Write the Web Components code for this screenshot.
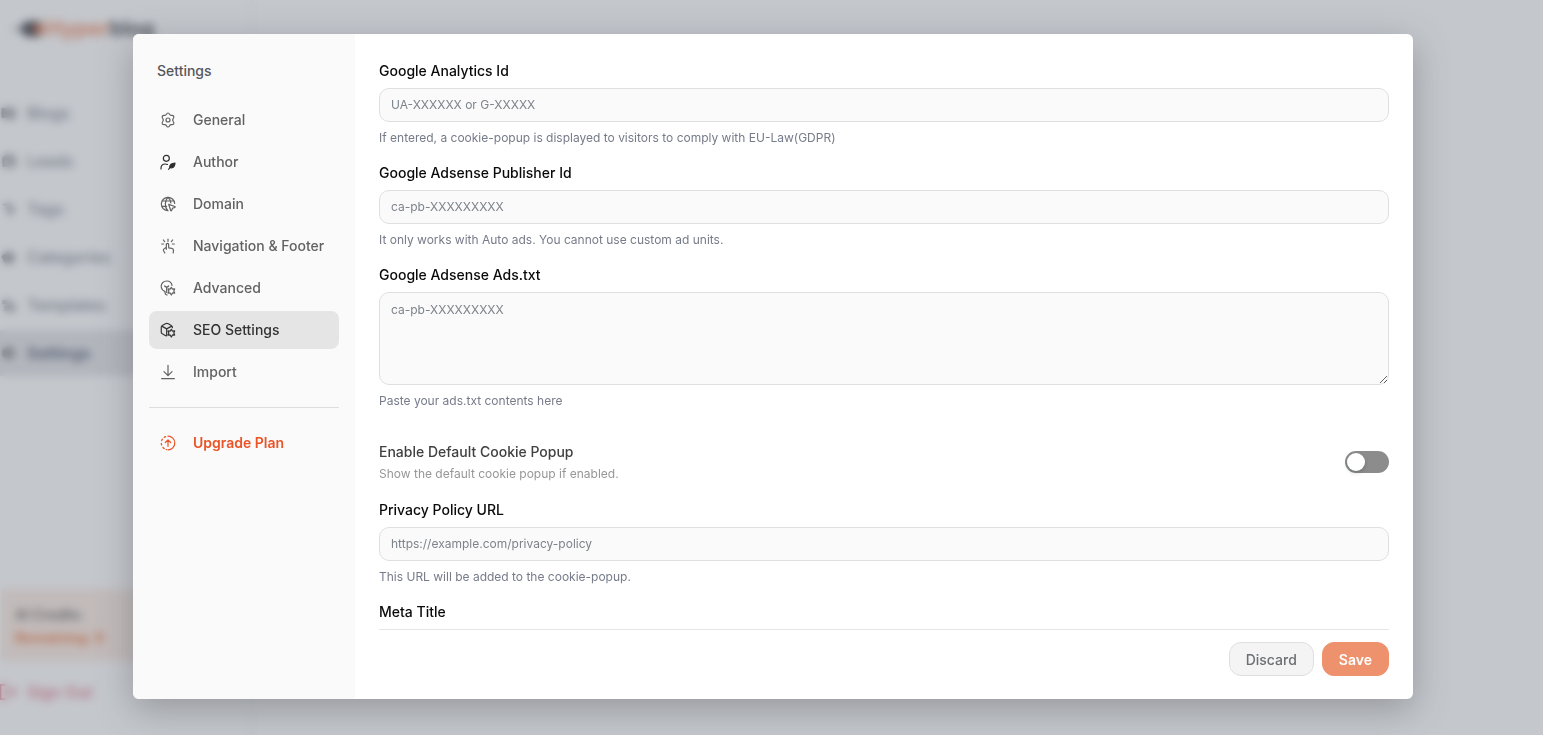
<!DOCTYPE html>
<html lang="en">
<head>
<meta charset="utf-8">
<title>Hyperblog - Settings</title>
<style>
body {
    margin: 0;
    height: 100vh;
    overflow: hidden;
    font-family: Inter, "Open Sans", sans-serif;
    font-size: 14px;
    line-height: 22px;
    background: #fff;
}
</style>
</head>
<body>

<blog-app></blog-app>

<modal-overlay>
    <settings-dialog>
        <settings-nav slot="nav"></settings-nav>

        <text-field label="Google Analytics Id" placeholder="UA-XXXXXX or G-XXXXX"
            hint="If entered, a cookie-popup is displayed to visitors to comply with EU-Law(GDPR)"></text-field>
        <text-field label="Google Adsense Publisher Id" placeholder="ca-pb-XXXXXXXXX"
            hint="It only works with Auto ads. You cannot use custom ad units."></text-field>
        <text-field multiline label="Google Adsense Ads.txt" placeholder="ca-pb-XXXXXXXXX"
            hint="Paste your ads.txt contents here"></text-field>
        <toggle-field label="Enable Default Cookie Popup" hint="Show the default cookie popup if enabled."></toggle-field>
        <text-field label="Privacy Policy URL" placeholder="https://example.com/privacy-policy"
            hint="This URL will be added to the cookie-popup."></text-field>
        <text-field label="Meta Title"></text-field>

        <action-button slot="actions">Discard</action-button>
        <action-button slot="actions" primary>Save</action-button>
    </settings-dialog>
</modal-overlay>

<script>
/* small cog in the lower right corner of an icon */
const cog = `<path d="M17 11l1.800 2.600 3.200-.2-1.300 3.100 1.300 3.100-3.200-.2L17 22.500l-1.800-3.100-3.200.2 1.300-3.100-1.300-3.100 3.200.2z"/>`;

const icons = {
    general: `<circle cx="12" cy="12" r="3"/><path d="M12 1.500c1.300 0 1.900.9 2.400 2 .6 1.200 1.600 1.700 2.900 1.500 1.500-.2 2.500 0 3.200 1.200.7 1.300.3 2.200-.6 3.300-.9 1.200-.9 3.800 0 5 .9 1.100 1.300 2 .6 3.300-.7 1.200-1.700 1.400-3.200 1.200-1.300-.2-2.300.3-2.900 1.500-.5 1.100-1.100 2-2.400 2s-1.900-.9-2.400-2c-.6-1.200-1.600-1.700-2.900-1.500-1.500.2-2.500 0-3.200-1.200-.7-1.300-.3-2.200.6-3.300.9-1.200.9-3.800 0-5-.9-1.100-1.300-2-.6-3.300.7-1.200 1.700-1.400 3.200-1.200 1.300.2 2.300-.3 2.900-1.500.5-1.100 1.100-2 2.400-2z"/>`,
    author: `<circle cx="9.500" cy="6.500" r="4.500"/><path d="M1.500 22.500v-1c0-4 2.900-6.500 6.500-6.500 1.200 0 2.200.2 3.200.7"/><path d="M14.500 20c.2-4 3-6.300 8-6.500-.2 4-2.200 7-5.500 7.200-1 0-1.800-.2-2.500-.7z" fill="currentColor"/><path d="M13 23c1-2 2.500-4 4.500-5"/>`,
    domain: `<path d="M22 11c-.5-5.100-4.800-9-10-9C6.500 2 2 6.500 2 12s4.500 10 10 10M12 2c-5 4.500-5.500 14-.5 20M12 2c2.800 2.500 4.200 5 4.300 8.500M3.500 7.500h17M2.500 15.500h7.500"/><path d="M13 12.500l9.300 3.300c.6.200.6 1 0 1.200l-3.500 1.300-1.500 3.500c-.2.600-1 .6-1.200 0z"/>`,
    nav: `<path d="M12 1.500v3.500M5 3l2 2.500M19 3l-2 2.500M2.500 9h3M18.500 9h3"/><path d="M9.500 17V9.800c0-1 .8-1.600 1.800-1.600s1.700.6 1.700 1.600v4.900l4.500.9c2 .4 3 1.300 2.800 3.200l-.5 3.700M9.500 14l-3.800 2.700c-.8.800-.9 1.500-.4 2.500l2 3.300"/>`,
    advanced: `<path d="M7.500 17.500C4 16 1.800 13 1.800 9.500c0-4.500 3.700-8 8.200-8s7.500 2.800 8 6.500M7.500 17.500c0 3 1 4.800 3.200 5M7 9c.9 1 1.900 1.500 3 1.500s2.100-.5 3-1.500M10 10.500v8"/>${cog}`,
    seo: `<path d="M18.500 8.500V7.600c0-1.200-.5-1.700-1.600-2.300l-4.400-2.600c-1.700-1-2.700-1-4.400 0L3.500 5.300C2.400 6 1.900 6.500 1.900 7.700v7.500c0 1.200.5 1.700 1.600 2.400l4.400 2.600c.7.400 1.300.6 1.900.6M2.700 6.200l7.300 4.100 7.500-4.100M10 10.300V20.500"/>${cog}`,
    import: `<path d="M12 2v15M6 11.500l6 6 6-6M2.500 22h19"/>`,
    upgrade: `<path d="M12 1.800c5.600 0 10.200 4.600 10.200 10.200S17.600 22.200 12 22.200"/><path d="M8.500 2.400c-.8.300-1.500.7-2.200 1.200M3.700 6.200c-.5.700-.9 1.400-1.200 2.200M1.900 12.500c.1.900.3 1.800.6 2.600M4.400 18.700c.6.600 1.300 1.200 2 1.600M9.200 21.900l.5.100"/><path d="M12 17V8M8 11.300L12 7.500l4 3.800"/>`
};

function svgIcon(name, size) {
    return `<svg width="${size}" height="${size}" viewBox="0 0 24 24" fill="none" stroke="currentColor"
        stroke-width="1.8" stroke-linecap="round" stroke-linejoin="round" aria-hidden="true">${icons[name]}</svg>`;
}

/* the dashboard that lies behind the dialog */
class BlogApp extends HTMLElement {

    connectedCallback() {
        const shadow = this.attachShadow({ mode: 'open' });
        const links = ['Blogs', 'Leads', 'Tags', 'Categories', 'Templates', 'Settings'];
        const glyphs = [
            `<path d="M1 3h6v10H1zM8 3h7v4H8zM8 8h7v6H8z"/>`,
            `<path d="M2 4l6-3 7 3v10H2zM5 7v4h6V7z" fill-rule="evenodd"/>`,
            `<path d="M1 3l7-1 7 7-6 5-3-1 3-4-4-4z"/>`,
            `<path d="M8 2l7 5-3 7H4L1 7z"/>`,
            `<path d="M2 3h6v4H2zM4 9h11v5H4zM9 3l5 5h-5z"/>`,
            `<path d="M8 1l6 4v6l-6 4-6-4V5z"/>`
        ];

        shadow.innerHTML = `
            <style>
            :host {
                display: flex;
                height: 100vh;
            }
            aside {
                display: flex;
                flex-direction: column;
                width: 252px;
                box-sizing: border-box;
                border-right: 1px solid #eceef0;
                padding: 18px 0 20px;
            }
            .logo {
                display: flex;
                align-items: center;
                padding-left: 12px;
                margin-bottom: 50px;
                font-size: 21px;
                font-weight: 700;
                color: #4a4a50;
            }
            .logo b {
                color: #f08a66;
                font-weight: 700;
            }
            nav { flex: 1; }
            a {
                display: flex;
                align-items: center;
                gap: 10px;
                height: 46px;
                margin-bottom: 2px;
                font-size: 16px;
                font-weight: 500;
                color: #7b8190;
                text-decoration: none;
            }
            a svg { fill: #8a8a8f; }
            a.current {
                background: #e2e3e5;
                color: #4a5270;
                font-weight: 600;
            }
            .credits {
                padding: 14px 13px 12px;
                margin: 0 12px 8px 2px;
                background: #fcebe2;
                font-weight: 600;
                line-height: 23px;
                color: #666;
            }
            .credits p { margin: 0; }
            .credits p + p { color: #ee8048; font-weight: 700; }
            a.out { color: #e27386; margin: 0; }
            a.out svg { fill: none; stroke: #e27386; stroke-width: 2; }
            </style>
            <aside>
                <div class="logo">
                    <svg width="34" height="22" viewBox="0 0 34 22">
                        <path d="M0 10h8v2H0zM8 6h3v10H8z" fill="#8a8a90"/>
                        <rect x="10" y="3" width="22" height="16" rx="8" fill="#3a3a40"/>
                        <circle cx="27" cy="11" r="5" fill="#e8764f"/>
                    </svg>
                    <span><b>Hyper</b>blog</span>
                </div>
                <nav>
                    ${links.map((text, i) => `<a href="#" class="${text === 'Settings' ? 'current' : ''}">
                        <svg width="17" height="16" viewBox="0 0 16 16">${glyphs[i]}</svg>${text}</a>`).join('')}
                </nav>
                <div class="credits">
                    <p>AI Credits</p>
                    <p>Remaining: 0</p>
                </div>
                <a href="#" class="out">
                    <svg width="17" height="16" viewBox="0 0 16 16"><path d="M7 1H0v14h7M5 8h10M11 4l4 4-4 4"/></svg>
                    Sign Out
                </a>
            </aside>
        `;
    }

}

class ModalOverlay extends HTMLElement {

    connectedCallback() {
        const shadow = this.attachShadow({ mode: 'open' });
        shadow.innerHTML = `
            <style>
            :host {
                position: fixed;
                inset: 0;
                display: flex;
                padding: 34px 130px 36px 133px;
                background: rgba(107, 114, 128, 0.4);
                backdrop-filter: blur(4px);
            }
            </style>
            <slot></slot>
        `;
    }

}

class SettingsDialog extends HTMLElement {

    connectedCallback() {
        const shadow = this.attachShadow({ mode: 'open' });
        shadow.innerHTML = `
            <style>
            :host {
                flex: 1;
                display: flex;
                min-width: 0;
                overflow: hidden;
                border-radius: 6px;
                background: #fff;
                box-shadow: 0 10px 36px rgba(60, 60, 70, 0.35);
            }
            main {
                flex: 1;
                display: flex;
                flex-direction: column;
                min-width: 0;
                padding: 0 24px;
            }
            form {
                flex: 1;
                display: flex;
                flex-direction: column;
                gap: 14px;
                min-height: 0;
                padding-top: 26px;
                overflow-y: auto;
                scrollbar-width: none;
            }
            footer {
                display: flex;
                justify-content: flex-end;
                gap: 8px;
                padding: 12px 0 23px;
                border-top: 1px solid #e5e5e5;
            }
            </style>
            <slot name="nav"></slot>
            <main>
                <form><slot></slot></form>
                <footer><slot name="actions"></slot></footer>
            </main>
        `;
    }

}

class SettingsNav extends HTMLElement {

    connectedCallback() {
        const shadow = this.attachShadow({ mode: 'open' });
        shadow.innerHTML = `
            <style>
            :host {
                display: block;
                flex: none;
                width: 222px;
                box-sizing: border-box;
                padding: 26px 16px;
                background: #fafafa;
            }
            h2 {
                margin: 0 8px 19px;
                font-size: 14px;
                font-weight: 500;
                color: #57575a;
            }
            nav {
                display: flex;
                flex-direction: column;
                gap: 4px;
            }
            hr {
                margin: 16px 0;
                border: 0;
                border-top: 1px solid #dedede;
            }
            </style>
            <h2>Settings</h2>
            <nav>
                <nav-item icon="general">General</nav-item>
                <nav-item icon="author" dark>Author</nav-item>
                <nav-item icon="domain">Domain</nav-item>
                <nav-item icon="nav">Navigation &amp; Footer</nav-item>
                <nav-item icon="advanced">Advanced</nav-item>
                <nav-item icon="seo" selected>SEO Settings</nav-item>
                <nav-item icon="import">Import</nav-item>
            </nav>
            <hr>
            <nav-item icon="upgrade" accent>Upgrade Plan</nav-item>
        `;
    }

}

class NavItem extends HTMLElement {

    connectedCallback() {
        const shadow = this.attachShadow({ mode: 'open' });
        shadow.innerHTML = `
            <style>
            :host {
                display: block;
                --item-color: #626262;
            }
            a {
                display: flex;
                align-items: center;
                gap: 17px;
                height: 38px;
                box-sizing: border-box;
                padding: 0 11px;
                border-radius: 8px;
                color: var(--item-color);
                font-weight: 500;
                line-height: 24px;
                text-decoration: none;
                white-space: nowrap;
            }
            svg { flex: none; }
            :host([dark]) svg { color: #2d2d2d; }
            :host([selected]) {
                --item-color: #333;
            }
            :host([selected]) a { background: #e5e5e5; }
            :host([accent]) { --item-color: #ea5427; }
            :host([accent]) a { font-weight: 600; }
            </style>
            <a href="#">${svgIcon(this.getAttribute('icon'), 16)}<span><slot></slot></span></a>
        `;
    }

}

class TextField extends HTMLElement {

    connectedCallback() {
        const shadow = this.attachShadow({ mode: 'open' });
        const placeholder = this.getAttribute('placeholder') || '';
        const hint = this.getAttribute('hint');

        shadow.innerHTML = `
            <style>
            :host {
                display: flex;
                flex: none;
                flex-direction: column;
                gap: 6px;
            }
            label {
                font-weight: 500;
                color: #0a0a0a;
            }
            input, textarea {
                display: block;
                width: 100%;
                box-sizing: border-box;
                margin: 0;
                padding: 0 11px;
                border: 1px solid #dfdfdf;
                border-radius: 10px;
                outline: none;
                background: #fafafa;
                font: 12px/20px Inter, "Open Sans", sans-serif;
                color: #222;
            }
            input {
                height: 34px;
                padding-bottom: 2px;
            }
            textarea {
                height: 93px;
                padding: 7px 11px;
                resize: vertical;
            }
            ::placeholder { color: #7d838b; opacity: 1; }
            p {
                margin: 0;
                font-size: 12px;
                line-height: 20px;
                color: #757b88;
            }
            </style>
            <label for="field">${this.getAttribute('label')}</label>
            ${this.hasAttribute('multiline')
                ? `<textarea id="field" placeholder="${placeholder}"></textarea>`
                : `<input id="field" type="text" placeholder="${placeholder}">`}
            ${hint ? `<p>${hint}</p>` : ''}
        `;
    }

}

class ToggleField extends HTMLElement {

    connectedCallback() {
        const shadow = this.attachShadow({ mode: 'open' });
        shadow.innerHTML = `
            <style>
            :host {
                display: flex;
                flex: none;
                align-items: center;
                justify-content: space-between;
                padding-top: 16px;
            }
            label {
                font-weight: 500;
                color: #404040;
            }
            p {
                margin: 0;
                font-size: 12px;
                color: #979797;
            }
            input {
                appearance: none;
                display: flex;
                width: 44px;
                height: 22px;
                box-sizing: border-box;
                margin: 0 0 2px;
                padding: 2px;
                border-radius: 11px;
                background: #8c8c8c;
            }
            input::before {
                content: "";
                width: 18px;
                height: 18px;
                border-radius: 50%;
                background: #fff;
                box-shadow: 0 2px 4px rgba(0, 35, 11, 0.2);
            }
            input:checked { background: #ea5427; justify-content: flex-end; }
            </style>
            <div>
                <label for="toggle">${this.getAttribute('label')}</label>
                <p>${this.getAttribute('hint')}</p>
            </div>
            <input id="toggle" type="checkbox" role="switch">
        `;
    }

}

class ActionButton extends HTMLElement {

    connectedCallback() {
        const shadow = this.attachShadow({ mode: 'open' });
        shadow.innerHTML = `
            <style>
            :host { display: block; }
            button {
                height: 34px;
                padding: 1px 16px 0;
                border: 1px solid #dfdfdf;
                border-radius: 12px;
                background: #f4f4f4;
                color: #6b7075;
                font: 500 14px/22px Inter, "Open Sans", sans-serif;
            }
            :host([primary]) button {
                border-color: #ee926d;
                background: #ee926d;
                color: #fff;
                font-weight: 600;
            }
            </style>
            <button type="button"><slot></slot></button>
        `;
    }

}

customElements.define('blog-app', BlogApp);
customElements.define('modal-overlay', ModalOverlay);
customElements.define('settings-dialog', SettingsDialog);
customElements.define('settings-nav', SettingsNav);
customElements.define('nav-item', NavItem);
customElements.define('text-field', TextField);
customElements.define('toggle-field', ToggleField);
customElements.define('action-button', ActionButton);
</script>
</body>
</html>
